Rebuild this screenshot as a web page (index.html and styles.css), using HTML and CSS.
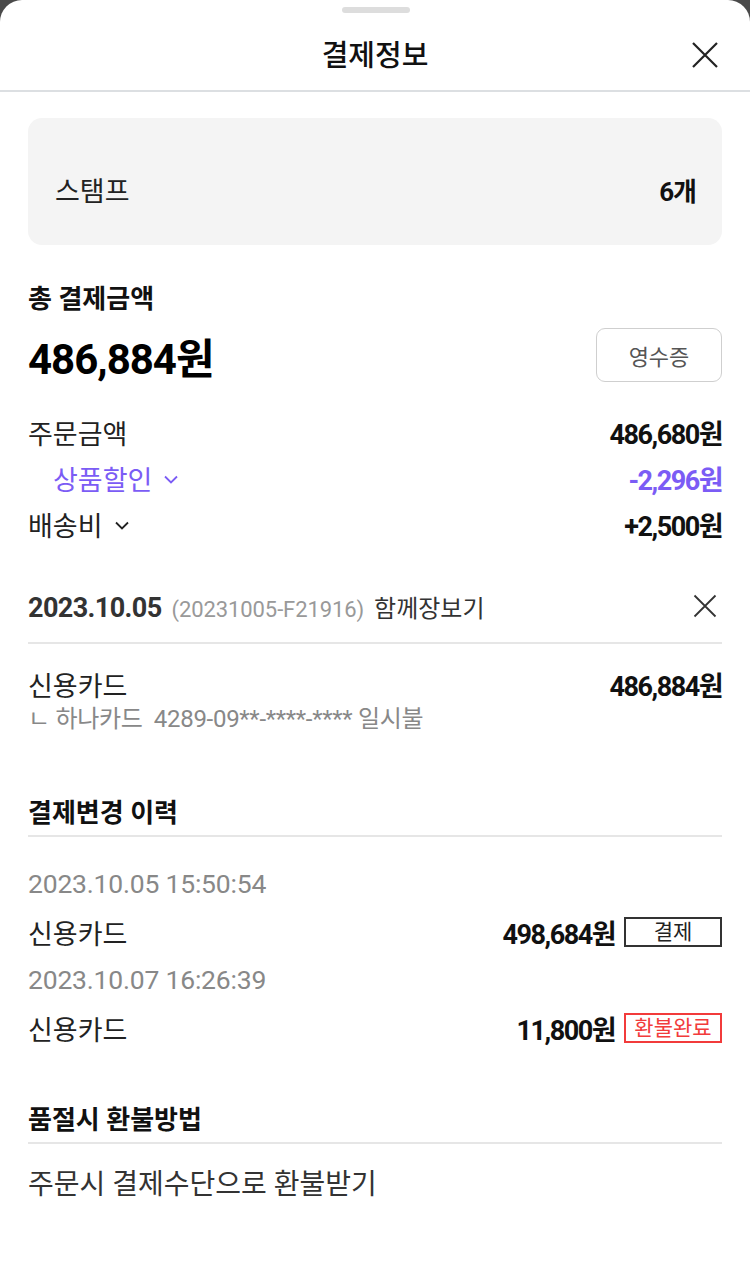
FILE: index.html
```html
<!DOCTYPE html>
<html lang="ko">
<head>
<meta charset="utf-8">
<title>결제정보</title>
<link rel="stylesheet" href="styles.css">
</head>
<body>
<div class="sheet">
  <header class="header">
    <div class="handle"></div>
    <h1 class="title">결제정보</h1>
    <svg class="close" width="28" height="28" viewBox="0 0 28 28"><path d="M2 2 L26 26 M26 2 L2 26" stroke="#222" stroke-width="2.2" fill="none"/></svg>
  </header>
  <main class="content">
    <div class="stamp-box">
      <span class="stamp-label">스탬프</span>
      <span class="stamp-count">6개</span>
    </div>

    <h2 class="sec-title total-title">총 결제금액</h2>
    <div class="total-row">
      <span class="total-amount">486,884원</span>
      <button class="receipt">영수증</button>
    </div>

    <div class="row first">
      <span class="label">주문금액</span>
      <span class="amount">486,680원</span>
    </div>
    <div class="row sub purple">
      <span class="label">상품할인 <svg class="chev" width="14" height="9" viewBox="0 0 14 9"><path d="M1 1.5 L7 7.5 L13 1.5" stroke="currentColor" stroke-width="1.8" fill="none"/></svg></span>
      <span class="amount">-2,296원</span>
    </div>
    <div class="row">
      <span class="label">배송비 <svg class="chev" width="14" height="9" viewBox="0 0 14 9"><path d="M1 1.5 L7 7.5 L13 1.5" stroke="#222" stroke-width="1.8" fill="none"/></svg></span>
      <span class="amount">+2,500원</span>
    </div>

    <div class="order-head">
      <div class="order-info">
        <span class="order-date">2023.10.05</span>
        <span class="order-no">(20231005-F21916)</span>
        <span class="order-type">함께장보기</span>
      </div>
      <svg class="order-x" width="24" height="24" viewBox="0 0 24 24"><path d="M1.5 1.5 L22.5 22.5 M22.5 1.5 L1.5 22.5" stroke="#333" stroke-width="1.8" fill="none"/></svg>
    </div>
    <div class="row pay-row">
      <span class="label">신용카드</span>
      <span class="amount">486,884원</span>
    </div>
    <div class="card-sub">ㄴ 하나카드&nbsp; 4289-09**-****-**** 일시불</div>

    <h2 class="sec-title lined history-title">결제변경 이력</h2>
    <div class="history">
      <div class="h-date">2023.10.05 15:50:54</div>
      <div class="h-row">
        <span class="label">신용카드</span>
        <span class="h-right"><span class="amount">498,684원</span><span class="badge">결제</span></span>
      </div>
      <div class="h-date">2023.10.07 16:26:39</div>
      <div class="h-row">
        <span class="label">신용카드</span>
        <span class="h-right"><span class="amount">11,800원</span><span class="badge red">환불완료</span></span>
      </div>
    </div>

    <h2 class="sec-title lined refund-title">품절시 환불방법</h2>
    <p class="refund-text">주문시 결제수단으로 환불받기</p>
  </main>
</div>
</body>
</html>
```
FILE: styles.css
```css
* { box-sizing: border-box; }
html, body {
  margin: 0;
  padding: 0;
  background: #4a4a4a;
}
body {
  font-family: Roboto, "Noto Sans CJK KR", sans-serif;
  color: #222;
}
.sheet {
  width: 750px;
  height: 1279px;
  background: #fff;
  border-radius: 22px 22px 0 0;
  overflow: hidden;
}
.header {
  position: relative;
  height: 92px;
  border-bottom: 2px solid #dcdfe2;
  display: flex;
  justify-content: center;
  align-items: flex-start;
}
.handle {
  position: absolute;
  top: 7px;
  left: 342px;
  width: 68px;
  height: 6px;
  border-radius: 3px;
  background: #dddddd;
}
.title {
  margin: 38px 0 0;
  font-size: 29px;
  line-height: 36px;
  font-weight: 500;
  color: #111;
}
.close {
  position: absolute;
  right: 31px;
  top: 41px;
}
.content {
  padding: 0 28px;
}
.stamp-box {
  margin-top: 26px;
  height: 127px;
  background: #f4f4f4;
  border-radius: 14px;
  padding: 58px 26px 0 27px;
  display: flex;
  justify-content: space-between;
  align-items: flex-start;
  font-size: 27px;
  line-height: 32px;
}
.stamp-label { color: #222; }
.stamp-count { font-weight: 700; color: #111; letter-spacing: -1px; font-size: 26px; }

.sec-title {
  margin: 0;
  font-size: 26px;
  line-height: 30px;
  font-weight: 700;
  color: #111;
}
.total-title { margin-top: 39px; }
.total-row {
  margin-top: 14px;
  height: 54px;
  display: flex;
  justify-content: space-between;
  align-items: center;
}
.total-amount {
  font-size: 42px;
  font-weight: 700;
  letter-spacing: -1px;
  color: #000;
}
.receipt {
  width: 126px;
  height: 54px;
  border: 1.5px solid #cfcfcf;
  border-radius: 9px;
  background: #fff;
  font-family: inherit;
  font-size: 22px;
  color: #555;
  padding: 0;
}

.row {
  display: flex;
  justify-content: space-between;
  align-items: center;
  height: 46px;
}
.row.first { margin-top: 27px; }
.label {
  font-size: 27px;
  color: #222;
  display: inline-flex;
  align-items: center;
  gap: 8px;
}
.amount {
  font-size: 27px;
  font-weight: 700;
  letter-spacing: -1.5px;
  color: #111;
}
.row.sub .label { padding-left: 25px; }
.purple .label, .purple .amount { color: #7b5cf5; }
.chev { margin-left: 4px; margin-top: 2px; }

.order-head {
  margin-top: 37px;
  height: 60px;
  padding-bottom: 14px;
  border-bottom: 2px solid #e6e6e6;
  display: flex;
  justify-content: space-between;
  align-items: center;
}
.order-info {
  display: flex;
  align-items: baseline;
  gap: 10px;
}
.order-date {
  font-size: 27px;
  font-weight: 700;
  color: #333;
  letter-spacing: -0.6px;
}
.order-no {
  font-size: 22px;
  color: #999;
  letter-spacing: -0.1px;
}
.order-type {
  font-size: 24px;
  color: #333;
}
.order-x { margin-right: 5px; }

.pay-row {
  margin-top: 20px;
  height: 40px;
}
.card-sub {
  height: 30px;
  line-height: 30px;
  font-size: 24px;
  color: #888;
  letter-spacing: -0.3px;
}

.lined {
  padding-bottom: 7px;
  border-bottom: 2px solid #e6e6e6;
}
.history-title { margin-top: 64px; }
.history { margin-top: 23px; }
.h-date {
  height: 48px;
  line-height: 48px;
  font-size: 26.5px;
  color: #888;
  letter-spacing: -0.2px;
}
.h-row {
  height: 48px;
  display: flex;
  justify-content: space-between;
  align-items: center;
}
.h-right {
  display: flex;
  align-items: center;
  gap: 9px;
}
.badge {
  width: 98px;
  height: 30px;
  border: 2px solid #333;
  font-size: 21px;
  line-height: 26px;
  text-align: center;
  color: #222;
}
.badge.red {
  border-color: #f23b3b;
  color: #f23b3b;
}
.refund-title { margin-top: 53px; }
.refund-text {
  margin: 21px 0 0;
  font-size: 28px;
  line-height: 40px;
  color: #333;
}
```
